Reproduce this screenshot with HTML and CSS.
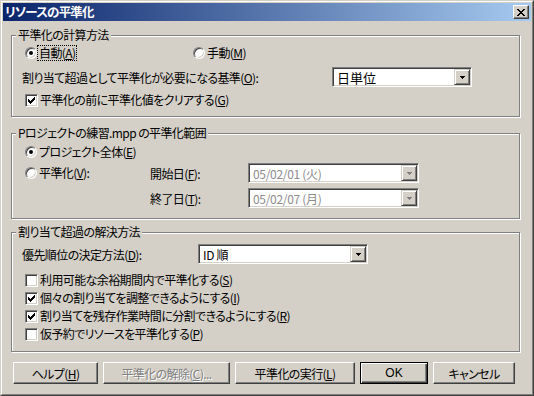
FILE: index.html
```
<!DOCTYPE html>
<html lang="ja">
<head>
<meta charset="utf-8">
<title>リソースの平準化</title>
<link rel="stylesheet" href="styles.css">
</head>
<body>
<div class="win">
 <div class="frame">
  <div class="titlebar">
   <span class="title">リソースの平準化</span>
   <span class="close"><svg width="8" height="7" viewBox="0 0 8 7" shape-rendering="crispEdges"><path d="M0 0h2v1h-2z M6 0h2v1h-2z M1 1h2v1h-2z M5 1h2v1h-2z M2 2h4v1h-4z M3 3h2v1h-2z M2 4h4v1h-4z M1 5h2v1h-2z M5 5h2v1h-2z M0 6h2v1h-2z M6 6h2v1h-2z" fill="#000"/></svg></span>
  </div>
  <div class="body">
   <fieldset class="grp g1">
    <legend>平準化の計算方法</legend>
    <div class="row g1-r1">
     <label class="opt opt-first"><span class="radio on"></span><span class="lbl focus">自動(<u>A</u>)</span></label>
     <label class="opt"><span class="radio"></span><span class="lbl">手動(<u>M</u>)</span></label>
    </div>
    <div class="row g1-r2">
     <span class="basis">割り当て超過として平準化が必要になる基準(<u>O</u>):</span>
     <div class="combo c-basis"><span class="val">日単位</span><span class="drop"><svg width="5" height="3" viewBox="0 0 5 3" shape-rendering="crispEdges"><path d="M0 0h5v1h-5z M1 1h3v1h-3z M2 2h1v1h-1z" fill="#000"/></svg></span></div>
    </div>
    <div class="row g1-r3">
     <span class="check"><svg width="7" height="7" viewBox="0 0 7 7" shape-rendering="crispEdges"><path d="M6 0h1v1h-1z M5 1h2v1h-2z M0 2h1v1h-1z M4 2h3v1h-3z M0 3h2v1h-2z M3 3h3v1h-3z M0 4h5v1h-5z M1 5h3v1h-3z M2 6h1v1h-1z" fill="#000"/></svg></span>
     <span class="lbl">平準化の前に平準化値をクリアする(<u>G</u>)</span>
    </div>
   </fieldset>

   <fieldset class="grp g2">
    <legend>Pロジェクトの練習.mpp の平準化範囲</legend>
    <div class="row g2-r1">
     <span class="radio on"></span><span class="lbl">プロジェクト全体(<u>E</u>)</span>
    </div>
    <div class="range">
     <div class="range-opt"><span class="radio"></span><span class="lbl">平準化(<u>V</u>):</span></div>
     <span class="date-lbl">開始日(<u>F</u>):</span>
     <div class="combo disabled c-date"><span class="val">05/02/01 (火)</span><span class="drop"><svg width="5" height="3" viewBox="0 0 5 3" shape-rendering="crispEdges"><path d="M0 0h5v1h-5z M1 1h3v1h-3z M2 2h1v1h-1z" fill="#808080"/></svg></span></div>
     <span></span>
     <span class="date-lbl">終了日(<u>T</u>):</span>
     <div class="combo disabled c-date"><span class="val">05/02/07 (月)</span><span class="drop"><svg width="5" height="3" viewBox="0 0 5 3" shape-rendering="crispEdges"><path d="M0 0h5v1h-5z M1 1h3v1h-3z M2 2h1v1h-1z" fill="#808080"/></svg></span></div>
    </div>
   </fieldset>

   <fieldset class="grp g3">
    <legend>割り当て超過の解決方法</legend>
    <div class="row g3-r1">
     <span class="prio">優先順位の決定方法(<u>D</u>):</span>
     <div class="combo c-prio"><span class="val">ID 順</span><span class="drop"><svg width="5" height="3" viewBox="0 0 5 3" shape-rendering="crispEdges"><path d="M0 0h5v1h-5z M1 1h3v1h-3z M2 2h1v1h-1z" fill="#000"/></svg></span></div>
    </div>
    <div class="checks">
     <div class="row chk-row"><span class="check"></span><span class="lbl">利用可能な余裕期間内で平準化する(<u>S</u>)</span></div>
     <div class="row chk-row"><span class="check"><svg width="7" height="7" viewBox="0 0 7 7" shape-rendering="crispEdges"><path d="M6 0h1v1h-1z M5 1h2v1h-2z M0 2h1v1h-1z M4 2h3v1h-3z M0 3h2v1h-2z M3 3h3v1h-3z M0 4h5v1h-5z M1 5h3v1h-3z M2 6h1v1h-1z" fill="#000"/></svg></span><span class="lbl">個々の割り当てを調整できるようにする(<u>I</u>)</span></div>
     <div class="row chk-row"><span class="check"><svg width="7" height="7" viewBox="0 0 7 7" shape-rendering="crispEdges"><path d="M6 0h1v1h-1z M5 1h2v1h-2z M0 2h1v1h-1z M4 2h3v1h-3z M0 3h2v1h-2z M3 3h3v1h-3z M0 4h5v1h-5z M1 5h3v1h-3z M2 6h1v1h-1z" fill="#000"/></svg></span><span class="lbl">割り当てを残存作業時間に分割できるようにする(<u>R</u>)</span></div>
     <div class="row chk-row"><span class="check"></span><span class="lbl">仮予約でリソースを平準化する(<u>P</u>)</span></div>
    </div>
   </fieldset>

   <div class="buttons">
    <div class="btn b-help">ヘルプ(<u>H</u>)</div>
    <div class="btn b-clear disabled">平準化の解除(<u>C</u>)...</div>
    <div class="btn b-run">平準化の実行(<u>L</u>)</div>
    <div class="btn b-ok default">OK</div>
    <div class="btn b-cancel">キャンセル</div>
   </div>
  </div>
 </div>
</div>
</body>
</html>
```
FILE: styles.css
```
* { box-sizing: border-box; }
html, body { margin: 0; padding: 0; }
body {
  width: 534px;
  height: 396px;
  overflow: hidden;
  background: #d4d0c8;
  font-family: "Noto Sans CJK JP", "Liberation Sans", sans-serif;
  font-size: 12px;
  font-feature-settings: "palt";
  letter-spacing: -0.6px;
  color: #000;
}
u { text-decoration: underline; text-underline-offset: 1px; }

.win {
  width: 534px;
  height: 396px;
  background: #d4d0c8;
  border: 1px solid;
  border-color: #d4d0c8 #404040 #404040 #d4d0c8;
}
.frame {
  height: 100%;
  border: 1px solid;
  border-color: #fff #808080 #808080 #fff;
  padding: 1px;
  display: flex;
  flex-direction: column;
}
.titlebar {
  height: 18px;
  flex: none;
  background: linear-gradient(to right, #0a246a, #a6caf0);
  display: flex;
  align-items: center;
  justify-content: space-between;
  padding: 0 2px 0 2px;
}
.title {
  color: #fff;
  font-weight: bold;
  font-size: 12.5px;
  letter-spacing: -0.8px;
  line-height: 14px;
}
.close {
  width: 16px;
  height: 14px;
  background: #d4d0c8;
  border: 1px solid;
  border-color: #fff #404040 #404040 #fff;
  box-shadow: inset -1px -1px 0 #808080;
  display: flex;
  align-items: center;
  justify-content: center;
}
.close svg { display: block; }

.body {
  flex: 1;
  padding: 7px 11px 0 8px;
  display: flex;
  flex-direction: column;
}

.grp {
  margin: 0;
  padding: 0;
  min-width: 0;
  width: 509px;
  border: 1px solid #808080;
  box-shadow: inset 1px 1px 0 #fff, 1px 1px 0 #fff;
  flex: none;
}
.grp legend {
  margin-left: 4px;
  padding: 0 2px;
  height: 14px;
  line-height: 14px;
  background: #d4d0c8;
}
.g1 { height: 89px; }
.g2 { height: 93px; margin-top: 9px; }
.g3 { height: 127px; margin-top: 6px; }

.row { display: flex; align-items: center; }
.lbl { line-height: 14px; white-space: nowrap; }

.radio {
  width: 12px;
  height: 12px;
  flex: none;
  border-radius: 50%;
  background: #fff;
  border: 1px solid;
  border-color: #808080 #fff #fff #808080;
  box-shadow: inset 1px 1px 0 #404040, inset -1px -1px 0 #d4d0c8;
  position: relative;
}
.radio.on::after {
  content: "";
  position: absolute;
  left: 3px;
  top: 3px;
  width: 4px;
  height: 4px;
  border-radius: 50%;
  background: #000;
}
.radio + .lbl { margin-left: 1px; padding: 0 1px; }
.focus { outline: 1px dotted #000; outline-offset: 0; }

.check {
  width: 13px;
  height: 13px;
  flex: none;
  background: #fff;
  border: 1px solid;
  border-color: #808080 #fff #fff #808080;
  box-shadow: inset 1px 1px 0 #404040, inset -1px -1px 0 #d4d0c8;
  display: flex;
  align-items: center;
  justify-content: center;
}
.check svg { display: block; }
.check + .lbl { margin-left: 2px; }

.combo {
  height: 20px;
  display: flex;
  align-items: center;
  background: #fff;
  border: 1px solid;
  border-color: #808080 #fff #fff #808080;
  box-shadow: inset 1px 1px 0 #404040, inset -1px -1px 0 #d4d0c8;
  padding: 1px;
  flex: none;
}
.combo .val {
  flex: 1;
  padding-left: 3px;
  white-space: nowrap;
  letter-spacing: -0.3px;
}
.combo.c-basis .val { font-size: 13px; letter-spacing: 0; }
.combo.disabled .val { color: #8c8c8c; }
.drop {
  width: 16px;
  height: 16px;
  flex: none;
  background: #d4d0c8;
  border: 1px solid;
  border-color: #d4d0c8 #404040 #404040 #d4d0c8;
  box-shadow: inset 1px 1px 0 #fff, inset -1px -1px 0 #808080;
  display: flex;
  align-items: center;
  justify-content: center;
}
.drop svg { display: block; }

/* group 1 */
.g1-r1 { margin-top: 2px; height: 18px; padding-left: 13px; }
.opt { display: flex; align-items: center; }
.opt-first { width: 168px; }
.g1-r2 { margin-top: 5px; height: 20px; padding-left: 10px; }
.basis { width: 310px; white-space: nowrap; }
.c-basis { width: 140px; }
.g1-r3 { margin-top: 5px; height: 16px; padding-left: 13px; }

/* group 2 */
.g2-r1 { margin-top: 4px; height: 16px; padding-left: 13px; }
.range {
  margin-top: 3px;
  padding-left: 13px;
  display: grid;
  grid-template-columns: 125px 98px 171px;
  grid-auto-rows: 20px;
  row-gap: 5px;
  align-items: center;
}
.range-opt { display: flex; align-items: center; }
.date-lbl { white-space: nowrap; }
.c-date { width: 171px; }

/* group 3 */
.g3-r1 { margin-top: 5px; height: 20px; padding-left: 10px; }
.prio { width: 176px; white-space: nowrap; }
.c-prio { width: 170px; }
.checks { margin-top: 7px; display: flex; flex-direction: column; }
.chk-row { height: 18px; padding-left: 13px; }

/* buttons */
.buttons {
  margin-top: 10px;
  margin-left: 2px;
  display: flex;
  gap: 5px;
}
.btn {
  height: 22px;
  display: flex;
  align-items: center;
  justify-content: center;
  background: #d4d0c8;
  border: 1px solid;
  border-color: #fff #404040 #404040 #fff;
  box-shadow: inset -1px -1px 0 #808080, inset 1px 1px 0 #d4d0c8;
  white-space: nowrap;
}
.btn.default {
  border-color: #000;
  box-shadow: inset 1px 1px 0 #fff, inset -1px -1px 0 #404040, inset -2px -2px 0 #808080;
}
.btn.disabled { color: #808080; text-shadow: 1px 1px 0 #fff; }
.b-help { width: 85px; }
.b-clear { width: 127px; }
.b-run { width: 120px; }
.b-ok { width: 68px; font-family: "Liberation Sans", sans-serif; font-size: 12px; letter-spacing: 0; }
.b-cancel { width: 82px; }
```
